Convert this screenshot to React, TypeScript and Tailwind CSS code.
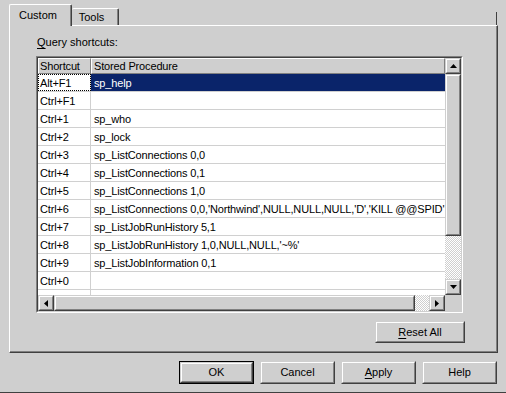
import type { ReactNode } from 'react'

// ─── Data ─────────────────────────────────────────────────────────────────────

const rows: [string, string][] = [
  ['Alt+F1', 'sp_help'],
  ['Ctrl+F1', ''],
  ['Ctrl+1', 'sp_who'],
  ['Ctrl+2', 'sp_lock'],
  ['Ctrl+3', 'sp_ListConnections 0,0'],
  ['Ctrl+4', 'sp_ListConnections 0,1'],
  ['Ctrl+5', 'sp_ListConnections 1,0'],
  ['Ctrl+6', "sp_ListConnections 0,0,'Northwind',NULL,NULL,NULL,'D','KILL @@SPID'"],
  ['Ctrl+7', 'sp_ListJobRunHistory 5,1'],
  ['Ctrl+8', "sp_ListJobRunHistory 1,0,NULL,NULL,'~%'"],
  ['Ctrl+9', 'sp_ListJobInformation 0,1'],
  ['Ctrl+0', ''],
  ['', ''],
]

// ─── Bits ─────────────────────────────────────────────────────────────────────

function Bevel({ className = '', children }: { className?: string; children?: ReactNode }) {
  return (
    <div
      className={`border border-t-[#cfcfcf] border-l-[#cfcfcf] border-r-[#404040] border-b-[#404040] bg-[#cfcfcf] ${className}`}
    >
      <div className="flex h-full w-full items-center justify-center border border-t-white border-l-white border-r-[#808080] border-b-[#808080]">
        {children}
      </div>
    </div>
  )
}

function Arrow({ dir }: { dir: 'up' | 'down' | 'left' | 'right' }) {
  const pts = {
    up: '0,4 7,4 3.5,0',
    down: '0,0 7,0 3.5,4',
    left: '4,0 4,7 0,3.5',
    right: '0,0 0,7 4,3.5',
  }[dir]
  const vertical = dir === 'up' || dir === 'down'
  return (
    <svg width={vertical ? 7 : 4} height={vertical ? 4 : 7} viewBox={vertical ? '0 0 7 4' : '0 0 4 7'}>
      <polygon points={pts} fill="#000" />
    </svg>
  )
}

const checker =
  'bg-[repeating-conic-gradient(#ffffff_0_25%,#cfcfcf_0_50%)] bg-[length:2px_2px]'

function Button({ label, u, isDefault }: { label: string; u?: number; isDefault?: boolean }) {
  const text =
    u === undefined ? (
      label
    ) : (
      <>
        {label.slice(0, u)}
        <span className="underline underline-offset-2">{label[u]}</span>
        {label.slice(u + 1)}
      </>
    )
  if (isDefault) {
    return (
      <div className="h-[23px] w-[75px] border border-black">
        <Bevel className="h-full w-full">{text}</Bevel>
      </div>
    )
  }
  return <Bevel className="h-[23px] w-[75px]">{text}</Bevel>
}

// ─── Main ─────────────────────────────────────────────────────────────────────

export default function App() {
  return (
    <div
      className="h-[393px] w-[506px] overflow-hidden border-b border-b-[#404040] bg-[#cfcfcf] text-[11px] leading-[13px] text-black"
      style={{ fontFamily: '"Liberation Sans", Arial, sans-serif' }}
    >
      {/* Tabs */}
      <div className="relative z-10 flex h-[25px] items-end pl-[9px] pt-[4px]">
        <div className="-mb-px flex h-[22px] w-[63px] rounded-t-[2px] border-l border-t border-r border-l-white border-t-white border-r-[#404040] bg-[#cfcfcf]">
          <div className="flex h-full w-full items-start justify-center border-r border-r-[#808080] pt-[4px] pr-[4px]">
            Custom
          </div>
        </div>
        <div className="flex h-[17px] w-[47px] rounded-t-[2px] border-t border-r border-t-white border-r-[#404040]">
          <div className="flex h-full w-full items-start justify-center border-r border-r-[#808080] pt-[2px] pr-[6px]">
            Tools
          </div>
        </div>
        <div className="ml-auto mr-[9px] h-[13px] w-px bg-[#404040]" />
      </div>

      {/* Panel */}
      <div className="ml-[9px] h-[328px] w-[489px] border border-t-white border-l-white border-r-[#404040] border-b-[#404040]">
        <div className="h-full w-full border-r border-b border-r-[#808080] border-b-[#808080] pl-[26px] pt-[10px]">
          <div className="ml-px">
            <span className="underline underline-offset-2">Q</span>uery shortcuts:
          </div>

          {/* List */}
          <div className="mt-[7px] h-[257px] w-[427px] border border-t-[#808080] border-l-[#808080] border-r-white border-b-white">
            <div className="grid h-full w-full grid-cols-[407px_16px] grid-rows-[237px_16px] border border-t-[#404040] border-l-[#404040] border-r-[#cfcfcf] border-b-[#cfcfcf]">
              <div className="overflow-hidden bg-white tracking-[-0.15px]">
                <div className="flex h-[16px]">
                  <div className="flex w-[53px] items-center border border-t-white border-l-white border-r-[#808080] border-b-[#808080] bg-[#cfcfcf] pl-[1px]">
                    Shortcut
                  </div>
                  <div className="flex flex-1 items-center border border-t-white border-l-white border-r-[#808080] border-b-[#808080] bg-[#cfcfcf] pl-[2px]">
                    Stored Procedure
                  </div>
                </div>
                {rows.map(([key, proc], i) => (
                  <div key={i} className="flex h-[18px] border-b border-b-[#d0d0d0]">
                    <div
                      className={`flex w-[53px] shrink-0 items-center border-r border-r-[#d0d0d0] pl-[2px] pt-px ${
                        i === 0 ? 'outline-1 outline-dotted -outline-offset-1 outline-black' : ''
                      }`}
                    >
                      {key}
                    </div>
                    <div
                      className={`flex min-w-0 flex-1 items-center whitespace-nowrap pl-[3px] pt-px ${
                        i === 0 ? 'bg-[#0a246a] text-white' : ''
                      }`}
                    >
                      {proc}
                    </div>
                  </div>
                ))}
              </div>

              {/* Vertical scrollbar */}
              <div className="flex flex-col">
                <Bevel className="h-[16px] w-[16px]">
                  <Arrow dir="up" />
                </Bevel>
                <Bevel className="h-[162px] w-[16px]" />
                <div className={`h-[43px] w-[16px] ${checker}`} />
                <Bevel className="h-[16px] w-[16px]">
                  <Arrow dir="down" />
                </Bevel>
              </div>

              {/* Horizontal scrollbar */}
              <div className="flex">
                <Bevel className="h-[16px] w-[16px]">
                  <Arrow dir="left" />
                </Bevel>
                <Bevel className="h-[16px] w-[361px]" />
                <div className={`h-[16px] w-[14px] ${checker}`} />
                <Bevel className="h-[16px] w-[16px]">
                  <Arrow dir="right" />
                </Bevel>
              </div>
              <div className="bg-[#cfcfcf]" />
            </div>
          </div>

          <div className="ml-[339px] mt-[8px]">
            <Bevel className="h-[22px] w-[90px]">
              <span>
                <span className="underline underline-offset-2">R</span>eset All
              </span>
            </Bevel>
          </div>
        </div>
      </div>

      {/* Dialog buttons */}
      <div className="mt-[8px] flex justify-end gap-[6px] pr-[9px]">
        <Button label="OK" isDefault />
        <Button label="Cancel" />
        <Button label="Apply" u={0} />
        <Button label="Help" />
      </div>
    </div>
  )
}
